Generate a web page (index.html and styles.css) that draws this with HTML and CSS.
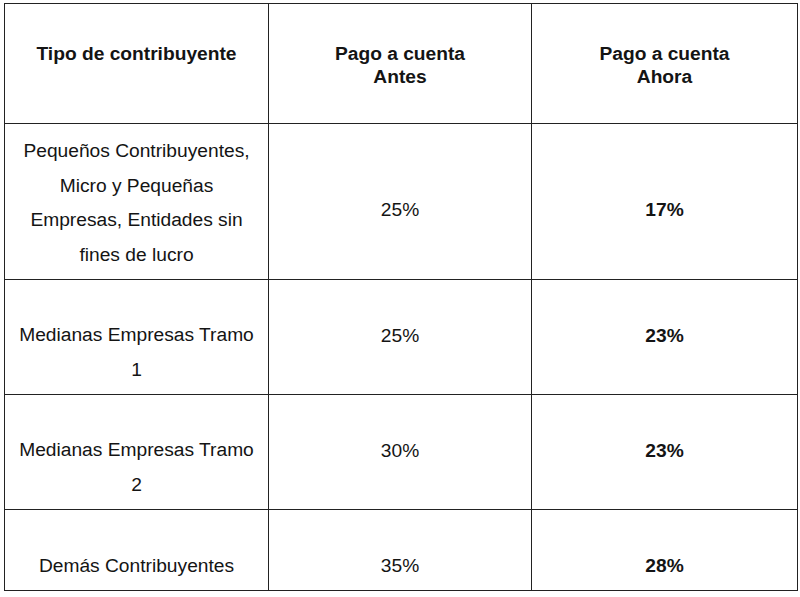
FILE: index.html
```html
<!DOCTYPE html>
<html lang="es">
<head>
<meta charset="utf-8">
<title>Pago a cuenta</title>
<link rel="stylesheet" href="styles.css">
</head>
<body>
<table class="rates">
  <colgroup>
    <col class="c1">
    <col class="c2">
    <col class="c3">
  </colgroup>
  <thead>
    <tr class="r-head">
      <th>Tipo de contribuyente</th>
      <th>Pago a cuenta<br>Antes</th>
      <th>Pago a cuenta<br>Ahora</th>
    </tr>
  </thead>
  <tbody>
    <tr class="r-1">
      <td>Pequeños Contribuyentes, Micro y Pequeñas Empresas, Entidades sin fines de lucro</td>
      <td class="lift-2">25%</td>
      <td class="lift-2 strong">17%</td>
    </tr>
    <tr class="r-2">
      <td>Medianas Empresas Tramo 1</td>
      <td class="lift-1">25%</td>
      <td class="lift-1 strong">23%</td>
    </tr>
    <tr class="r-2">
      <td>Medianas Empresas Tramo 2</td>
      <td class="lift-1">30%</td>
      <td class="lift-1 strong">23%</td>
    </tr>
    <tr class="r-3">
      <td>Demás Contribuyentes</td>
      <td>35%</td>
      <td class="strong">28%</td>
    </tr>
  </tbody>
</table>
</body>
</html>
```
FILE: styles.css
```css
html, body {
  margin: 0;
  padding: 0;
  background: #ffffff;
}

body {
  padding: 3px 0 0 4px;
  font-family: "Liberation Sans", Arial, sans-serif;
  color: #141414;
}

.rates {
  border-collapse: collapse;
  table-layout: fixed;
  width: 793px;
  border: 1px solid #222222;
  box-shadow: 0 2px 0 #ececec;
}

.c1 { width: 264px; }
.c2 { width: 263px; }
.c3 { width: 266px; }

.rates th,
.rates td {
  border: 1px solid #222222;
  text-align: center;
  font-size: 19.2px;
}

.rates th {
  vertical-align: top;
  font-weight: bold;
  line-height: 23px;
  padding: 38px 12px 0;
}

.rates td {
  vertical-align: bottom;
  font-weight: normal;
  line-height: 34.5px;
  padding: 8px 10px 7px;
}

.r-head { height: 120px; }
.r-1 { height: 156px; }
.r-2 { height: 115px; }
.r-3 { height: 81px; }

.rates td.lift-1 { padding-bottom: 41px; }
.rates td.lift-2 { padding-bottom: 52px; }

.rates td.strong { font-weight: bold; }
```
